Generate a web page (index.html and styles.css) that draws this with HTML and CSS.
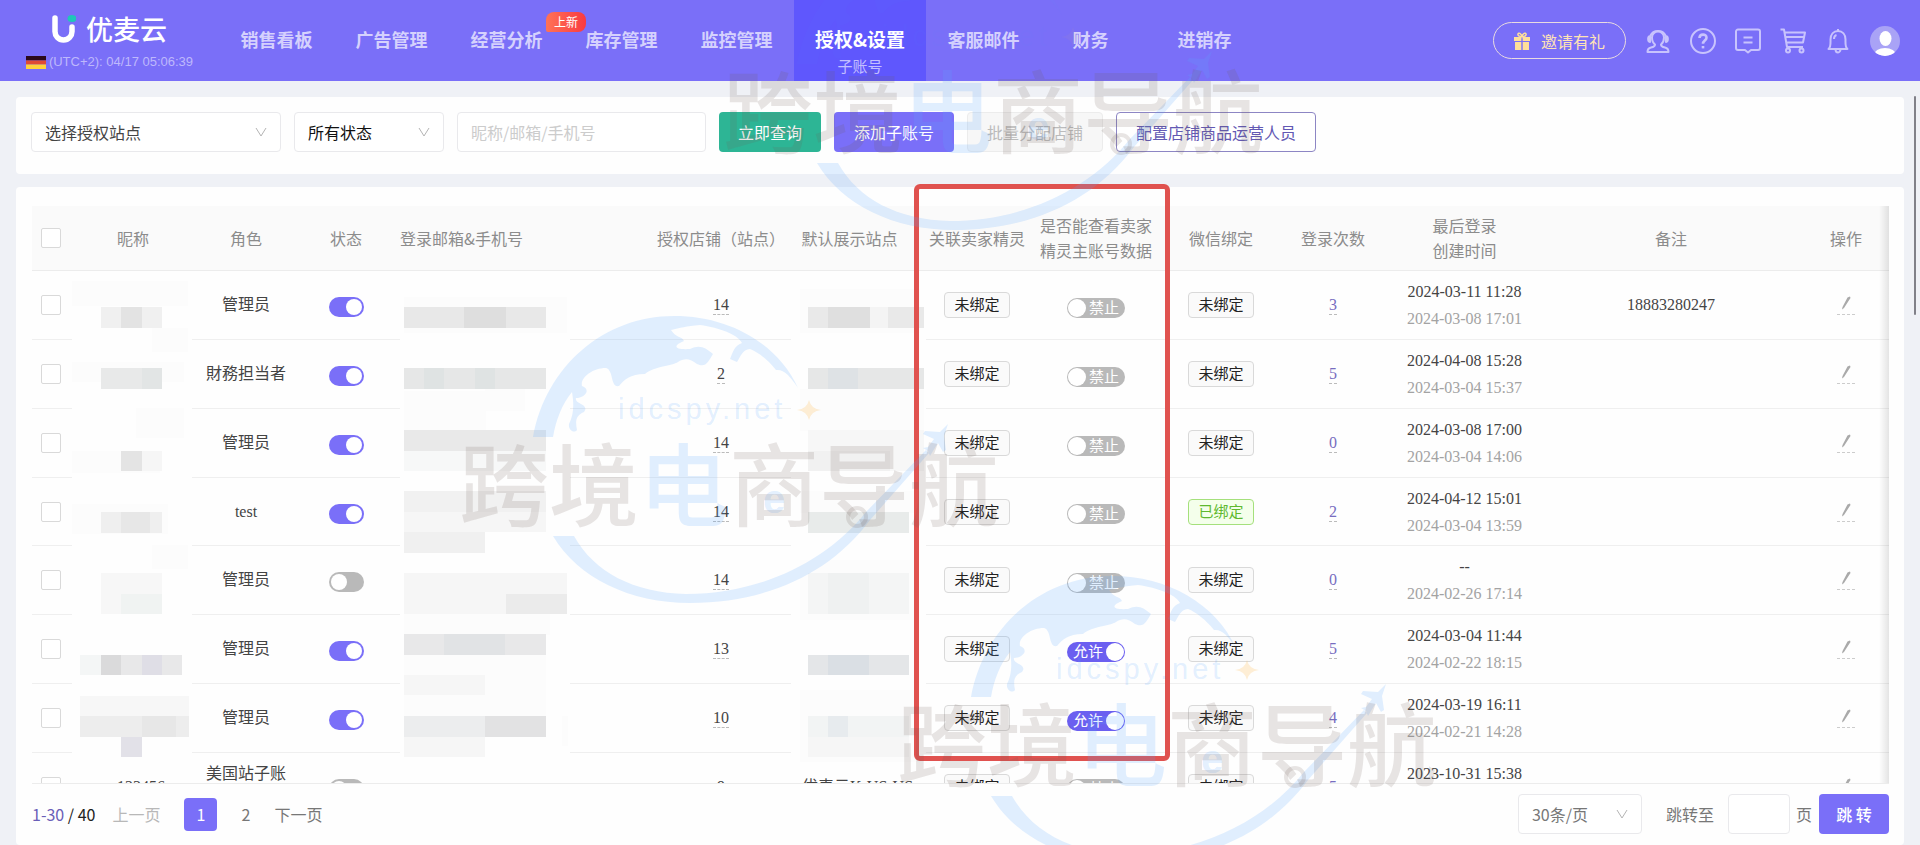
FILE: index.html
```html
<!DOCTYPE html>
<html lang="zh-CN">
<head>
<meta charset="utf-8">
<meta name="viewport" content="width=device-width, initial-scale=1">
<title>优麦云 - 子账号</title>
<link rel="stylesheet" href="styles.css">
</head>
<body>
<header class="topbar">
  <div class="brand">
    <a class="brand-logo" href="#">
      <svg class="brand-mark" viewBox="0 0 24 30" aria-hidden="true">
        <path d="M3 4v13a8.500 8.500 0 0 0 8.500 9a8.500 8.500 0 0 0 8.500-9v-4" fill="none" stroke="#fff" stroke-width="5.500" stroke-linecap="round"/>
        <ellipse cx="20" cy="4.500" rx="4.500" ry="3.500" fill="#1fc7b8"/>
      </svg>
      <span>优麦云</span>
    </a>
    <div class="brand-clock">
      <svg class="flag" viewBox="0 0 20 13" aria-hidden="true"><path fill="#2b0a1c" d="M0 0h20v4.500H0z"/><path fill="#e04a35" d="M0 4.500h20v4H0z"/><path fill="#ffd23c" d="M0 8.500h20V13H0z"/></svg>
      <span>(UTC+2): 04/17 05:06:39</span>
    </div>
  </div>
  <nav class="nav">
    <a class="nav-item" href="#">销售看板</a>
    <a class="nav-item" href="#">广告管理</a>
    <a class="nav-item" href="#">经营分析<span class="nav-badge">上新</span></a>
    <a class="nav-item" href="#">库存管理</a>
    <a class="nav-item" href="#">监控管理</a>
    <a class="nav-item nav-item-active" href="#">授权&amp;设置<span class="nav-sub">子账号</span></a>
    <a class="nav-item" href="#">客服邮件</a>
    <a class="nav-item nav-item-short" href="#">财务</a>
    <a class="nav-item nav-item-long" href="#">进销存</a>
  </nav>
  <div class="tools">
    <button class="invite" type="button">
      <svg class="gift" viewBox="0 0 16 18" aria-hidden="true"><path fill="#ffdf9a" d="M0 5h7.300v4H0zM8.700 5H16v4H8.700zM1 10h6.300v8H1zM8.700 10H15v8H8.700z"/><path d="M8 4.500C5 4.500 3.500 3.500 4 2s3-1 4 2.500C9 1 11.500.5 12 2s-1 2.500-4 2.500z" fill="none" stroke="#ffdf9a" stroke-width="1.500"/></svg>
      邀请有礼
    </button>
    <button class="tool" type="button" aria-label="客服">
      <svg viewBox="0 0 26 26"><path d="M10 16.500C8 15 7 12.500 7 9.500a6 6 0 0 1 12 0c0 3-1 5.500-3 7 0 2 1 2.500 4 3 2.500.5 3.500 1.500 3.500 4.500h-21c0-3 1-4 3.500-4.500 3-.5 4-1 4-3z"/><path d="M5.500 7.500a8 7 0 0 1 15 0M5 8c-2.500.5-2.500 5.500 0 6zM21 8c2.500.5 2.500 5.500 0 6z"/></svg>
    </button>
    <button class="tool" type="button" aria-label="帮助">
      <svg viewBox="0 0 26 26"><circle cx="13" cy="13" r="12"/><path d="M9.500 10c0-4.500 7-4.500 7-.3 0 2.800-3.500 3-3.500 6" stroke-width="2.600"/><path d="M13 18v2.400" stroke-width="2.600"/></svg>
    </button>
    <button class="tool" type="button" aria-label="消息">
      <svg viewBox="0 0 26 26"><path d="M3 1.500h20a2 2 0 0 1 2 2V20a2 2 0 0 1-2 2h-7l-3 2.500-3-2.500H3a2 2 0 0 1-2-2V3.500a2 2 0 0 1 2-2zM8.500 9.500h9M8.500 14.500h9"/></svg>
    </button>
    <button class="tool" type="button" aria-label="购物车">
      <svg viewBox="0 0 26 26"><path d="M.5 1.500h3.500l3 17.500h16M4.500 4.500H25l-2 10H6.500M5.500 9H24"/><circle cx="8" cy="22.500" r="2"/><circle cx="21.500" cy="22.500" r="2"/></svg>
    </button>
    <button class="tool" type="button" aria-label="通知">
      <svg viewBox="0 0 26 26"><path d="M13 1v2M3.500 21c2.500-2 2-5 2-9.500 0-5 3-8.500 7.500-8.500s7.500 3.500 7.500 8.500c0 4.500-.5 7.500 2 9.500zM10.500 21a2.500 3.500 0 0 0 5 0M9 11c0-2 .8-3.500 2.500-4"/></svg>
    </button>
    <button class="tool tool-avatar" type="button" aria-label="账户">
      <svg viewBox="0 0 30 30"><defs><clipPath id="face"><circle cx="15" cy="15" r="15"/></clipPath></defs><g clip-path="url(#face)"><rect width="30" height="30" fill="#a9a3f6"/><ellipse cx="15.500" cy="12.500" rx="6" ry="7.500" fill="#fff"/><ellipse cx="15" cy="29" rx="11" ry="7" fill="#fff"/></g></svg>
    </button>
  </div>
</header>

<main class="page">
  <form class="card filters">
    <label class="select select-site"><select aria-label="选择授权站点"><option>选择授权站点</option></select><svg class="chevron" viewBox="0 0 12 10"><path d="M1 1l5 8 5-8"/></svg></label>
    <label class="select select-state"><select aria-label="状态"><option>所有状态</option></select><svg class="chevron" viewBox="0 0 12 10"><path d="M1 1l5 8 5-8"/></svg></label>
    <input class="field field-search" type="text" aria-label="搜索" placeholder="昵称/邮箱/手机号">
    <button class="btn btn-query" type="button">立即查询</button>
    <button class="btn btn-primary" type="button">添加子账号</button>
    <button class="btn btn-off" type="button" disabled>批量分配店铺</button>
    <button class="btn btn-line" type="button">配置店铺商品运营人员</button>
  </form>

  <section class="card list">
    <div class="table-wrap">
      <table class="table">
        <colgroup>
          <col class="w-check"><col class="w-name"><col class="w-role"><col class="w-state"><col class="w-mail"><col class="w-shop"><col class="w-site"><col class="w-link"><col class="w-view"><col class="w-wechat"><col class="w-count"><col class="w-time"><col class="w-note"><col class="w-act">
        </colgroup>
        <thead>
          <tr>
            <th><input class="check" type="checkbox" aria-label="全选"></th>
            <th>昵称</th><th>角色</th><th>状态</th><th class="left">登录邮箱&amp;手机号</th><th>授权店铺（站点）</th><th>默认展示站点</th><th>关联卖家精灵</th><th>是否能查看卖家<br>精灵主账号数据</th><th>微信绑定</th><th>登录次数</th><th>最后登录<br>创建时间</th><th>备注</th><th class="act">操作</th>
          </tr>
        </thead>
        <tbody>
          <tr>
            <td><input class="check" type="checkbox" aria-label="选择"></td><td></td><td class="role">管理员</td>
            <td><input class="switch" type="checkbox" role="switch" aria-label="状态" checked></td><td></td>
            <td><a class="num" href="#">14</a></td><td></td><td><span class="tag">未绑定</span></td>
            <td><label class="toggle"><input type="checkbox" role="switch"><span>禁止</span></label></td>
            <td><span class="tag">未绑定</span></td><td><a class="num num-link" href="#">3</a></td>
            <td class="time">2024-03-11 11:28<br><small>2024-03-08 17:01</small></td><td>18883280247</td>
            <td class="act"><a class="edit" href="#" aria-label="编辑"><svg viewBox="0 0 10 14"><use href="#pen"/></svg></a></td>
          </tr>
          <tr>
            <td><input class="check" type="checkbox" aria-label="选择"></td><td></td><td class="role">財務担当者</td>
            <td><input class="switch" type="checkbox" role="switch" aria-label="状态" checked></td><td></td>
            <td><a class="num" href="#">2</a></td><td></td><td><span class="tag">未绑定</span></td>
            <td><label class="toggle"><input type="checkbox" role="switch"><span>禁止</span></label></td>
            <td><span class="tag">未绑定</span></td><td><a class="num num-link" href="#">5</a></td>
            <td class="time">2024-04-08 15:28<br><small>2024-03-04 15:37</small></td><td></td>
            <td class="act"><a class="edit" href="#" aria-label="编辑"><svg viewBox="0 0 10 14"><use href="#pen"/></svg></a></td>
          </tr>
          <tr>
            <td><input class="check" type="checkbox" aria-label="选择"></td><td></td><td class="role">管理员</td>
            <td><input class="switch" type="checkbox" role="switch" aria-label="状态" checked></td><td></td>
            <td><a class="num" href="#">14</a></td><td></td><td><span class="tag">未绑定</span></td>
            <td><label class="toggle"><input type="checkbox" role="switch"><span>禁止</span></label></td>
            <td><span class="tag">未绑定</span></td><td><a class="num num-link" href="#">0</a></td>
            <td class="time">2024-03-08 17:00<br><small>2024-03-04 14:06</small></td><td></td>
            <td class="act"><a class="edit" href="#" aria-label="编辑"><svg viewBox="0 0 10 14"><use href="#pen"/></svg></a></td>
          </tr>
          <tr>
            <td><input class="check" type="checkbox" aria-label="选择"></td><td></td><td class="role">test</td>
            <td><input class="switch" type="checkbox" role="switch" aria-label="状态" checked></td><td></td>
            <td><a class="num" href="#">14</a></td><td></td><td><span class="tag">未绑定</span></td>
            <td><label class="toggle"><input type="checkbox" role="switch"><span>禁止</span></label></td>
            <td><span class="tag tag-ok">已绑定</span></td><td><a class="num num-link" href="#">2</a></td>
            <td class="time">2024-04-12 15:01<br><small>2024-03-04 13:59</small></td><td></td>
            <td class="act"><a class="edit" href="#" aria-label="编辑"><svg viewBox="0 0 10 14"><use href="#pen"/></svg></a></td>
          </tr>
          <tr>
            <td><input class="check" type="checkbox" aria-label="选择"></td><td></td><td class="role">管理员</td>
            <td><input class="switch" type="checkbox" role="switch" aria-label="状态"></td><td></td>
            <td><a class="num" href="#">14</a></td><td></td><td><span class="tag">未绑定</span></td>
            <td><label class="toggle"><input type="checkbox" role="switch"><span>禁止</span></label></td>
            <td><span class="tag">未绑定</span></td><td><a class="num num-link" href="#">0</a></td>
            <td class="time">--<br><small>2024-02-26 17:14</small></td><td></td>
            <td class="act"><a class="edit" href="#" aria-label="编辑"><svg viewBox="0 0 10 14"><use href="#pen"/></svg></a></td>
          </tr>
          <tr>
            <td><input class="check" type="checkbox" aria-label="选择"></td><td></td><td class="role">管理员</td>
            <td><input class="switch" type="checkbox" role="switch" aria-label="状态" checked></td><td></td>
            <td><a class="num" href="#">13</a></td><td></td><td><span class="tag">未绑定</span></td>
            <td><label class="toggle"><input type="checkbox" role="switch" checked><span>允许</span></label></td>
            <td><span class="tag">未绑定</span></td><td><a class="num num-link" href="#">5</a></td>
            <td class="time">2024-03-04 11:44<br><small>2024-02-22 18:15</small></td><td></td>
            <td class="act"><a class="edit" href="#" aria-label="编辑"><svg viewBox="0 0 10 14"><use href="#pen"/></svg></a></td>
          </tr>
          <tr>
            <td><input class="check" type="checkbox" aria-label="选择"></td><td></td><td class="role">管理员</td>
            <td><input class="switch" type="checkbox" role="switch" aria-label="状态" checked></td><td></td>
            <td><a class="num" href="#">10</a></td><td></td><td><span class="tag">未绑定</span></td>
            <td><label class="toggle"><input type="checkbox" role="switch" checked><span>允许</span></label></td>
            <td><span class="tag">未绑定</span></td><td><a class="num num-link" href="#">4</a></td>
            <td class="time">2024-03-19 16:11<br><small>2024-02-21 14:28</small></td><td></td>
            <td class="act"><a class="edit" href="#" aria-label="编辑"><svg viewBox="0 0 10 14"><use href="#pen"/></svg></a></td>
          </tr>
          <tr>
            <td><input class="check" type="checkbox" aria-label="选择"></td><td class="name">123456</td><td class="role">美国站子账号</td>
            <td><input class="switch" type="checkbox" role="switch" aria-label="状态"></td><td></td>
            <td><a class="num" href="#">9</a></td><td class="site">优麦云K-US-US</td><td><span class="tag">未绑定</span></td>
            <td><label class="toggle"><input type="checkbox" role="switch"><span>禁止</span></label></td>
            <td><span class="tag">未绑定</span></td><td><a class="num num-link" href="#">5</a></td>
            <td class="time">2023-10-31 15:38<br><small>2023-10-31 15:38</small></td><td></td>
            <td class="act"><a class="edit" href="#" aria-label="编辑"><svg viewBox="0 0 10 14"><use href="#pen"/></svg></a></td>
          </tr>
        </tbody>
      </table>
      <svg class="mosaic" viewBox="32 206 1857 578" preserveAspectRatio="xMinYMin slice" aria-hidden="true">
        <g fill="#fefefe"><path d="M72 280h120v490H72zM400 280h170v500H400zM791 280h135v482H791z"/></g>
        <g fill="#fcfcfc"><path d="M72 281h116v25H72zM152 328h36v24h-36zM72 362h112v20H72zM136 408h48v30h-48zM72 451h88v22H72zM72 504h96v30H72zM152 545h36v24h-36zM404 297h163v36H404zM485 389h40v22h-40zM404 611h146v24H404zM404 655h142v62H404zM404 391h82v40h-82zM800 289h120v44H800zM800 389h124v42H800zM800 491h120v22H800zM800 560h118v60H800zM800 690h118v72H800zM562 716h6v30h-6z"/></g>
        <path fill="#f0f0f0" d="M101 307h61v21h-61z"/><path fill="#e3e3e3" d="M121 307h21v21h-21z"/>
        <path fill="#e8e9e9" d="M101 368h61v21h-61z"/><path fill="#e2e5e5" d="M142 368h20v21h-20z"/>
        <path fill="#e4e4e4" d="M121 451h21v20h-21z"/><path fill="#f6f6f6" d="M142 451h20v20h-20z"/>
        <path fill="#efefef" d="M101 512h61v21h-61z"/><path fill="#e7e7e7" d="M121 512h29v21h-29z"/>
        <path fill="#f7f7f7" d="M101 573h61v41h-61z"/><path fill="#f0f3f2" d="M121 594h41v20h-41z"/>
        <path fill="#f4f6f6" d="M80 655h21v20H80z"/><path fill="#dadadb" d="M101 655h20v20h-20z"/><path fill="#e8e8e9" d="M121 655h61v20h-61z"/><path fill="#dfdee6" d="M142 655h20v20h-20z"/>
        <path fill="#f7f7f7" d="M80 696h109v20H80z"/><path fill="#ededed" d="M80 716h109v21H80z"/><path fill="#e7e7e7" d="M142 716h34v21h-34z"/><path fill="#e2e1e8" d="M121 737h21v20h-21z"/>
        <path fill="#e8e8e8" d="M404 307h142v21H404z"/><path fill="#dedede" d="M464 307h42v21h-42z"/>
        <path fill="#e6e7e7" d="M404 368h142v21H404z"/><path fill="#dfe3e3" d="M424 368h20v21h-20zM475 368h20v21h-20z"/>
        <path fill="#e9e9e9" d="M404 430h142v21H404z"/><path fill="#f7f8f8" d="M404 451h142v20H404z"/>
        <path fill="#f1f1f1" d="M404 491h142v21H404z"/><path fill="#f6f6f6" d="M404 512h142v20H404z"/><path fill="#f0f0f0" d="M404 532h81v21h-81z"/>
        <path fill="#f6f6f6" d="M404 573h163v41H404z"/><path fill="#ebebeb" d="M506 594h61v20h-61z"/>
        <path fill="#e8e8e9" d="M404 634h142v21H404z"/><path fill="#e1e3e5" d="M444 634h20v21h-20zM464 634h41v21h-41z"/>
        <path fill="#f6f6f6" d="M404 675h81v20h-81z"/><path fill="#ecedee" d="M404 716h142v21H404z"/><path fill="#e2e2e3" d="M485 716h61v21h-61z"/><path fill="#f6f6f6" d="M404 737h81v20h-81z"/>
        <path fill="#e9e9e9" d="M808 307h116v21H808z"/><path fill="#dfdfdf" d="M828 307h42v21h-42z"/><path fill="#f4f4f4" d="M870 307h18v21h-18z"/>
        <path fill="#e6e7e7" d="M808 368h116v21H808z"/><path fill="#dee2e5" d="M828 368h30v21h-30z"/>
        <path fill="#f7f7f7" d="M808 430h116v41H808z"/><path fill="#f1f1f1" d="M808 451h82v20h-82z"/>
        <path fill="#e8ebea" d="M808 512h101v21H808z"/><path fill="#f4f5f5" d="M808 573h101v41H808z"/><path fill="#eff1f1" d="M828 573h41v41h-41z"/>
        <path fill="#e4e6e8" d="M808 655h101v20H808z"/><path fill="#dadfe4" d="M828 655h41v20h-41z"/>
        <path fill="#f2f4f4" d="M808 716h101v21H808z"/><path fill="#e7ebee" d="M828 716h20v21h-20z"/><path fill="#f6f6f6" d="M808 737h101v20H808z"/>
      </svg>
    </div>
    <footer class="pager">
      <span class="total"><b>1-30</b> / 40</span>
      <button class="page-btn page-prev" type="button" disabled>上一页</button>
      <button class="page-btn page-num page-on" type="button">1</button>
      <button class="page-btn page-num" type="button">2</button>
      <button class="page-btn" type="button">下一页</button>
      <label class="select select-size"><select aria-label="每页条数"><option>30条/页</option></select><svg class="chevron" viewBox="0 0 12 10"><path d="M1 1l5 8 5-8"/></svg></label>
      <label class="jump">跳转至<input class="field field-jump" type="text">页</label>
      <button class="btn btn-primary btn-jump" type="button">跳 转</button>
    </footer>
  </section>
</main>

<div class="scroll-thumb"></div>
<div class="highlight"></div>

<svg class="watermark" aria-hidden="true">
  <defs>
    <path id="pen" d="M6.500 1.500L9 .5 9.500 2 8.500 3.500 3 12 1 13.500 1.500 11z" fill="#aaa"/>
    <g id="cap">
      <path class="wm-blue" d="M533 437C546 366 604 316 674 316C730 316 778 344 798 388C790 376 784 369 776 370C768 360 758 352 750 349C742 350 741 356 737 362L730 359C733 352 734 346 742 343C737 334 720 328 700 325C686 326 680 328 671 330C676 338 682 336 684 341C674 345 672 350 690 349C700 344 706 348 713 354C708 362 706 368 697 364C690 358 684 358 678 362C672 366 655 366 645 374C630 374 624 380 619 386C610 388 614 370 606 368C592 368 580 378 582 386C592 390 584 398 576 398C574 404 590 404 584 412C574 416 576 424 577 430C574 434 568 430 569 424C574 414 574 404 572 392C562 404 556 420 553 437Z"/>
      <text class="wm-blue wm-url" x="618" y="419">idcspy.net</text>
      <path class="wm-star" d="M809 400q2 9 12 10q-10 1-12 10q-2-9-12-10q10-1 12-10z"/>
    </g>
    <g id="mark">
      <g class="wm-blue">
        <path d="M553 536H574C594 572 634 593 686 594C760 594 826 562 866 512L926 450L929 453L870 520C830 574 766 603 690 603C630 603 578 578 553 536Z"/>
        <path d="M948 424l-8 8-15-1-2 3 11 5-6 8-5 1 5 3 2 5 3-5 5-8 5 9 3-2-2-14z"/>
        <text class="wm-e" x="763" y="513">e</text>
      </g>
      <circle class="wm-ring" cx="857" cy="517" r="9"/>
      <text class="wm-name" x="459" y="519">跨境<tspan class="wm-blue">电</tspan>商导航</text>
    </g>
  </defs>
  <use href="#cap"/>
  <use href="#mark"/>
  <use class="wm-faint" href="#cap" x="264" y="-373"/>
  <use href="#mark" x="264" y="-373"/>
  <use href="#cap" x="438" y="260"/>
  <use href="#mark" x="438" y="260"/>
</svg>
</body>
</html>
```
FILE: styles.css
```css
:root {
  --brand: #7a6ff8;
  --brand-dark: #5f57fd;
  --line: #e9e9ec;
  --text: #444;
  --muted: #8c8c8c;
  --sans: "Liberation Sans", "Noto Sans CJK SC", sans-serif;
  --cjk: "Noto Sans CJK SC", sans-serif;
  --serif: "Liberation Serif", "Noto Sans CJK SC", serif;
}

* { box-sizing: border-box; }

body {
  margin: 0;
  height: 100vh;
  display: flex;
  flex-direction: column;
  overflow: hidden;
  background: #eff1f6;
  color: var(--text);
  font: 16px/26px var(--cjk);
}

a { color: inherit; text-decoration: none; }
button, input, select { font: inherit; color: inherit; margin: 0; }
button { cursor: pointer; }

/* top bar */
.topbar {
  flex: none;
  display: flex;
  height: 81px;
  padding-right: 20px;
  background: var(--brand);
  color: #fff;
}
.brand {
  flex: none;
  width: 219px;
  display: flex;
  flex-direction: column;
  align-items: center;
  padding-top: 9px;
}
.brand-logo {
  display: flex;
  align-items: center;
  gap: 10px;
  font-size: 27px;
  font-weight: 500;
  line-height: 40px;
}
.brand-mark { width: 24px; height: 30px; }
.brand-clock {
  display: flex;
  align-items: center;
  gap: 3px;
  color: #beb8fc;
  font: 13px/26px var(--sans);
}
.flag { width: 20px; height: 13px; }
.nav { display: flex; flex: none; }
.nav-item {
  position: relative;
  width: 115px;
  color: #d5d1fd;
  font-size: 18px;
  font-weight: 700;
  line-height: 78px;
  text-align: center;
  white-space: nowrap;
}
.nav-item-active { width: 132px; background: var(--brand-dark); color: #fff; font-size: 19px; }
.nav-item-short { width: 99px; }
.nav-item-long { width: 129px; }
.nav-sub {
  position: absolute;
  left: 0;
  right: 0;
  bottom: 2px;
  color: #c3bfff;
  font-size: 15px;
  font-weight: 400;
  line-height: 26px;
}
.nav-badge {
  position: absolute;
  left: 97px;
  top: 12px;
  width: 40px;
  border-radius: 8px 8px 8px 2px;
  background: linear-gradient(90deg, #ff7256, #f93a41);
  color: #fff;
  font-size: 12px;
  font-weight: 400;
  line-height: 20px;
}
.tools { margin-left: auto; display: flex; align-items: center; gap: 19px; }
.invite {
  display: flex;
  align-items: center;
  gap: 11px;
  height: 37px;
  padding: 0 20px;
  border: 1px solid #e9dbe0;
  border-radius: 19px;
  background: none;
  color: #ffe3b5;
}
.gift { width: 16px; height: 18px; }
.tool { width: 26px; height: 26px; padding: 0; border: 0; background: none; }
.tool svg { display: block; width: 100%; fill: none; stroke: #c8c3fd; stroke-width: 2; stroke-linejoin: round; }
.tool-avatar { width: 30px; height: 30px; }
.tool-avatar svg { stroke: none; }

/* page */
.page {
  flex: 1;
  min-height: 0;
  display: flex;
  flex-direction: column;
  gap: 13px;
  padding: 16px 16px 0;
}
.card { border-radius: 4px; background: #fefefe; }
.filters { display: flex; gap: 13px; padding: 15px 15px 22px; }

.select { position: relative; display: block; height: 40px; }
.select select {
  width: 100%;
  height: 100%;
  padding: 0 13px;
  border: 1px solid var(--line);
  border-radius: 4px;
  appearance: none;
  background: #fff;
}
.chevron {
  position: absolute;
  right: 14px;
  top: 15px;
  width: 12px;
  height: 10px;
  fill: none;
  stroke: #b4b4b4;
  pointer-events: none;
}
.select-site { width: 250px; }
.select-state { width: 150px; color: #111; }
.field { height: 40px; border: 1px solid var(--line); border-radius: 4px; background: #fff; padding: 0 13px; }
.field::placeholder { color: #ccc; opacity: 1; }
.field-search { width: 249px; }
.btn {
  height: 40px;
  padding: 0 19px;
  border: 1px solid transparent;
  border-radius: 4px;
  white-space: nowrap;
}
.btn-query { padding: 0 18px; background: #2db595; color: #fff; }
.btn-primary { background: var(--brand); color: #fff; }
.btn-off { border-color: #ececec; background: #f7f7f7; color: #bbb; }
.btn-line { border-color: #8d86c4; background: #fff; color: #6359b4; }

/* table */
.list { flex: 1; min-height: 0; display: flex; flex-direction: column; padding: 19px 15px 0 16px; }
.table-wrap {
  position: relative;
  flex: 1;
  min-height: 0;
  overflow: hidden;
  border-bottom: 1px solid #ececec;
}
.table-wrap::after {
  content: "";
  position: absolute;
  inset: 0 0 0 auto;
  width: 10px;
  background: linear-gradient(90deg, rgba(0, 0, 0, 0), rgba(0, 0, 0, .1));
}
.table { width: 100%; table-layout: fixed; border-collapse: separate; border-spacing: 0; }
.w-check { width: 38px; }
.w-name { width: 126px; }
.w-role, .w-state, .w-act { width: 100px; }
.w-mail { width: 261px; }
.w-shop { width: 128px; }
.w-site { width: 129px; }
.w-link { width: 126px; }
.w-view { width: 112px; }
.w-wechat { width: 138px; }
.w-count { width: 86px; }
.w-time { width: 177px; }
.w-note { width: 236px; }
.table th {
  height: 65px;
  padding: 0;
  border-bottom: 1px solid #ececec;
  background: #fafafa;
  color: var(--muted);
  font-weight: 400;
  line-height: 25px;
  white-space: nowrap;
}
.table .left { padding-left: 4px; text-align: left; }
.table .act { padding-left: 14px; }
.table td {
  height: 69px;
  padding: 0;
  border-bottom: 1px solid #efefef;
  font-family: var(--serif);
  text-align: center;
}
.table tr:nth-child(4n) td { height: 68px; }
.table .name { padding-left: 16px; }
.table .role { padding: 0 8px; }
.table .site { padding-left: 16px; white-space: nowrap; }
.table .time { line-height: 27px; }
.time small { color: #a3a3a3; font-size: 16px; }

.check {
  display: block;
  width: 20px;
  height: 20px;
  margin: 0 auto;
  appearance: none;
  border: 1px solid #d9d9d9;
  border-radius: 2px;
  background: #fff;
}
.check:checked { background: var(--brand); }

.switch {
  display: block;
  width: 35px;
  height: 20px;
  margin: 4px auto 0;
  padding: 2px;
  appearance: none;
  border-radius: 10px;
  background: #b9b9b9;
}
.switch::before {
  content: "";
  display: block;
  width: 16px;
  height: 16px;
  border-radius: 8px;
  background: #fff;
}
.switch:checked { background: var(--brand); }
.switch:checked::before { margin-left: auto; }

.toggle { position: relative; display: block; width: 58px; height: 20px; margin: 5px auto 0; }
.toggle input {
  display: block;
  width: 100%;
  height: 100%;
  padding: 1px;
  appearance: none;
  border-radius: 10px;
  background: #b9b9b9;
}
.toggle input::before {
  content: "";
  display: block;
  width: 18px;
  height: 18px;
  border-radius: 9px;
  background: #fff;
}
.toggle input:checked { background: #6b5ff0; }
.toggle input:checked::before { margin-left: auto; }
.toggle span {
  position: absolute;
  inset: 0 6px 0 22px;
  color: #fff;
  font-size: 15px;
  line-height: 20px;
  white-space: nowrap;
}
.toggle input:checked + span { inset: 0 22px 0 6px; }

.tag {
  display: inline-block;
  padding: 0 9px;
  border: 1px solid #d9d9d9;
  border-radius: 4px;
  background: #fafafa;
  color: #222;
  font-size: 15px;
  line-height: 24px;
}
.tag-ok { border-color: #a5e07c; background: #f4ffeb; color: #5fb92f; }

.num { display: inline-block; border-bottom: 1px dashed #bbb; line-height: 18px; }
.num-link { color: #776dc0; }
.edit { display: inline-block; width: 18px; padding-bottom: 4px; border-bottom: 1px dashed #ccc; line-height: 0; }
.edit svg { width: 10px; height: 14px; }

.mosaic { position: absolute; left: 0; top: 0; width: 1857px; height: 578px; pointer-events: none; }

/* pager */
.pager { flex: none; display: flex; align-items: center; height: 61px; padding-bottom: 1px; }
.total { color: #222; }
.total b { color: #6a5fb8; font-weight: 400; }
.page-btn { height: 33px; padding: 0; border: 0; background: none; color: #777; }
.page-prev { margin: 0 24px 0 17px; color: #b8b8b8; }
.page-num { width: 33px; margin-right: 12px; border-radius: 4px; }
.page-on { background: var(--brand); color: #fff; }
.select-size { width: 124px; margin-left: auto; color: #777; }
.jump { display: flex; align-items: center; gap: 6px; margin: 0 7px 0 24px; color: #777; }
.field-jump { width: 62px; margin-left: 8px; }
.btn-jump { width: 70px; padding: 0; font-weight: 500; }

/* overlays */
.scroll-thumb {
  position: absolute;
  right: 4px;
  top: 96px;
  width: 2px;
  height: 219px;
  border-radius: 1px;
  background: #808088;
}
.highlight {
  position: absolute;
  left: 914px;
  top: 184px;
  width: 256px;
  height: 577px;
  border: 5px solid #e0524f;
  border-radius: 6px;
  pointer-events: none;
}
.watermark { position: absolute; inset: 0; width: 100%; height: 100%; pointer-events: none; }
.wm-blue { fill: rgba(90, 165, 255, .18); }
.wm-star { fill: rgba(255, 190, 90, .25); }
.wm-ring { fill: none; stroke: rgba(110, 95, 90, .16); stroke-width: 4; }
.wm-faint { opacity: .2; }
.wm-url { font: 29px "Liberation Sans", sans-serif; letter-spacing: 4px; }
.wm-e { font: 700 40px "Liberation Sans", sans-serif; }
.wm-name { fill: rgba(110, 95, 90, .16); font: 500 90px "Noto Sans CJK SC", sans-serif; }
```
